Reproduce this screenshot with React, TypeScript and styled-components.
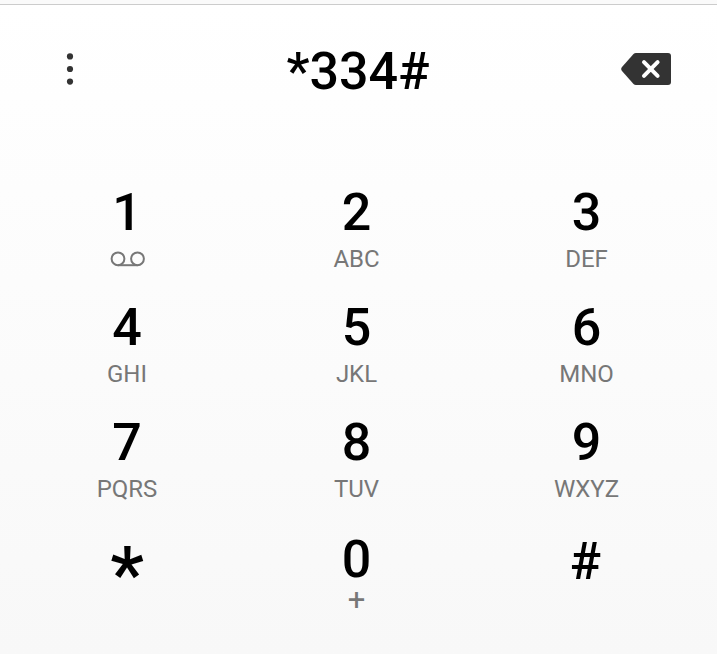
import React from 'react';
import styled, { createGlobalStyle } from 'styled-components';

const GlobalStyle = createGlobalStyle`
  * { box-sizing: border-box; }
  body { margin: 0; }
`;

const Dialer = styled.main`
  width: 717px;
  height: 654px;
  padding-top: 4px;
  overflow: hidden;
  font-family: Roboto, sans-serif;
  color: #000;
  background: linear-gradient(#fafafa 4px, #fff 4px, #f8f8f8);
`;

const NumberBar = styled.header`
  display: grid;
  grid-template-columns: 139px 1fr 141px;
  align-items: center;
  height: 130px;
  border-top: 1px solid #ccc;
`;

const IconButton = styled.button<{ $inset?: number }>`
  display: flex;
  justify-content: center;
  padding: 0 ${({ $inset = 0 }) => $inset}px 2px 0;
  border: 0;
  background: none;
`;

const Dialed = styled.output`
  padding: 5px 0 0 1px;
  text-align: center;
  font-size: 52px;
  font-weight: 500;
  line-height: 60px;
`;

const Keypad = styled.section`
  display: grid;
  grid-template-columns: 230px 229px 231px;
  grid-auto-rows: 115px;
  padding: 49px 0 0 12px;
`;

const Key = styled.button<{ $drop: number; $inset: number }>`
  display: flex;
  flex-direction: column;
  align-items: center;
  padding: ${({ $drop }) => $drop}px ${({ $inset }) => $inset}px 0 0;
  border: 0;
  background: none;
  color: inherit;
  font-family: inherit;
`;

const Digit = styled.span<{ $size: number }>`
  font-size: ${({ $size }) => $size}px;
  font-weight: 500;
  line-height: 60px;
`;

const Letters = styled.span<{ $size: number }>`
  display: flex;
  justify-content: center;
  color: #777;
  font-size: ${({ $size }) => $size}px;
  line-height: ${({ $size }) => ($size > 24 ? 20 : 32)}px;
`;

const VoicemailIcon = styled.svg`
  display: block;
  margin: 8px 0 0 1px;
`;

interface KeyData {
  digit: string;
  letters?: string;
  drop?: number;
  inset?: number;
  size?: number;
  letterSize?: number;
}

const keys: KeyData[] = [
  { digit: '1' },
  { digit: '2', letters: 'ABC' },
  { digit: '3', letters: 'DEF' },
  { digit: '4', letters: 'GHI' },
  { digit: '5', letters: 'JKL' },
  { digit: '6', letters: 'MNO' },
  { digit: '7', letters: 'PQRS' },
  { digit: '8', letters: 'TUV' },
  { digit: '9', letters: 'WXYZ' },
  { digit: '*', size: 76, drop: 16 },
  { digit: '0', letters: '+', drop: 2, letterSize: 31 },
  { digit: '#', drop: 4, inset: 2 },
];

export default function App() {
  return (
    <Dialer>
      <GlobalStyle />
      <NumberBar>
        <IconButton aria-label="More options">
          <svg width="8" height="34" viewBox="0 0 8 34" fill="#333">
            <circle cx="4" cy="4.4" r="3.1" />
            <circle cx="4" cy="17" r="3.1" />
            <circle cx="4" cy="29.6" r="3.1" />
          </svg>
        </IconButton>
        <Dialed>*334#</Dialed>
        <IconButton aria-label="Delete" $inset={1}>
          <svg width="50" height="32" viewBox="0 0 50 32">
            <path d="M15 0H47Q50 0 50 3V29Q50 32 47 32H15Q13.5 32 12.5 31L1 18Q-.6 16 1 14L12.5 1Q13.5 0 15 0Z" fill="#333" />
            <path d="M23 9.200L36.600 22.800M36.600 9.200L23 22.800" stroke="#fff" strokeWidth="4" strokeLinecap="round" />
          </svg>
        </IconButton>
      </NumberBar>
      <Keypad>
        {keys.map(({ digit, letters, drop = 0, inset = 0, size = 52, letterSize = 24 }) => (
          <Key key={digit} $drop={drop} $inset={inset}>
            <Digit $size={size}>{digit}</Digit>
            {digit === '1' && (
              <VoicemailIcon width="36" height="16" viewBox="0 0 36 16" fill="none" stroke="#777" strokeWidth="2">
                <circle cx="8" cy="7.800" r="6.400" />
                <circle cx="27.500" cy="7.800" r="6.400" />
                <path d="M8 14.200H27.500" />
              </VoicemailIcon>
            )}
            {letters && <Letters $size={letterSize}>{letters}</Letters>}
          </Key>
        ))}
      </Keypad>
    </Dialer>
  );
}
